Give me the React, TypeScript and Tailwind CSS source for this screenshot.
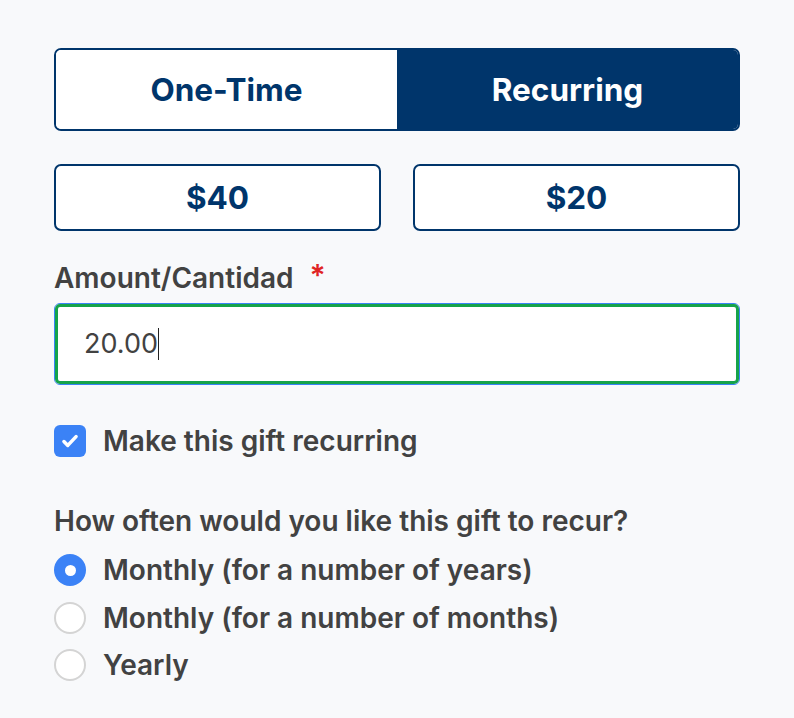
import { useState } from 'react';

const options = [
  'Monthly (for a number of years)',
  'Monthly (for a number of months)',
  'Yearly',
];

export default function App() {
  const [mode, setMode] = useState<'one' | 'rec'>('rec');
  const [amount, setAmount] = useState('20.00');
  const [recurring, setRecurring] = useState(true);
  const [freq, setFreq] = useState(0);

  return (
    <div
      className="min-h-[718px] bg-[#f8f9fb] px-[54px] pt-[48px] text-[#424242]"
      style={{ fontFamily: 'Inter, "Liberation Sans", sans-serif' }}
    >
      {/* One-time / recurring toggle */}
      <div className="flex h-[83px] overflow-hidden rounded-[7px] border-2 border-[#00356b]">
        <button
          onClick={() => setMode('one')}
          className={`flex-1 text-[31.5px] font-bold ${mode === 'one' ? 'bg-[#00356b] text-white' : 'bg-white text-[#00356b]'}`}
        >
          One-Time
        </button>
        <button
          onClick={() => setMode('rec')}
          className={`flex-1 text-[31.5px] font-bold ${mode === 'rec' ? 'bg-[#00356b] text-white' : 'bg-white text-[#00356b]'}`}
        >
          Recurring
        </button>
      </div>

      {/* Preset amounts */}
      <div className="mt-[33px] grid grid-cols-2 gap-[32px]">
        {['40', '20'].map((v) => (
          <button
            key={v}
            onClick={() => setAmount(`${v}.00`)}
            className="h-[67px] rounded-[7px] border-2 border-[#00356b] bg-white text-[31.5px] font-bold text-[#00356b]"
          >
            ${v}
          </button>
        ))}
      </div>

      {/* Amount input */}
      <label className="mt-[30px] flex items-start text-[28px] font-semibold leading-[34px]">
        Amount/Cantidad
        <span className="ml-[16px] text-[30px] leading-[28px] text-[#e02424]">*</span>
      </label>
      <div className="mt-[8px] rounded-[6px] border border-[#3b82f6]">
        <div className="flex h-[80px] items-center rounded-[5px] border-[3px] border-[#16a34a] bg-white px-[26px]">
          <input
            value={amount}
            onChange={(e) => setAmount(e.target.value)}
            className="field-sizing-content min-w-[10px] bg-transparent text-[27px] text-[#424242] caret-transparent outline-none"
          />
          <span className="h-[32px] w-[1.5px] bg-[#222]" />
        </div>
      </div>

      {/* Recurring checkbox */}
      <label className="mt-[40px] flex cursor-pointer items-center gap-[17px]">
        <span
          onClick={() => setRecurring(!recurring)}
          className={`flex h-[32px] w-[32px] items-center justify-center rounded-[6px] ${recurring ? 'bg-[#3b82f6]' : 'border-2 border-[#d4d4d4] bg-white'}`}
        >
          {recurring && (
            <svg viewBox="0 0 20 20" className="h-[22px] w-[22px]" fill="none" stroke="white" strokeWidth={3.2} strokeLinecap="round" strokeLinejoin="round">
              <path d="M4.5 10.5l3.5 3.5 7.5-8" />
            </svg>
          )}
        </span>
        <span className="text-[28px] font-semibold leading-[32px]">Make this gift recurring</span>
      </label>

      {/* Frequency */}
      <div className="mt-[47px] text-[28px] font-semibold leading-[34px]">
        How often would you like this gift to recur?
      </div>
      <div className="mt-[16px] flex flex-col gap-[15.5px]">
        {options.map((o, i) => (
          <label key={o} className="flex h-[32px] cursor-pointer items-center gap-[17px]" onClick={() => setFreq(i)}>
            <span
              className={`flex h-[32px] w-[32px] items-center justify-center rounded-full ${freq === i ? 'bg-[#3b82f6]' : 'border-2 border-[#d4d4d4] bg-white'}`}
            >
              {freq === i && <span className="h-[11px] w-[11px] rounded-full bg-white" />}
            </span>
            <span className="text-[28px] font-semibold leading-[32px]">{o}</span>
          </label>
        ))}
      </div>
    </div>
  );
}
